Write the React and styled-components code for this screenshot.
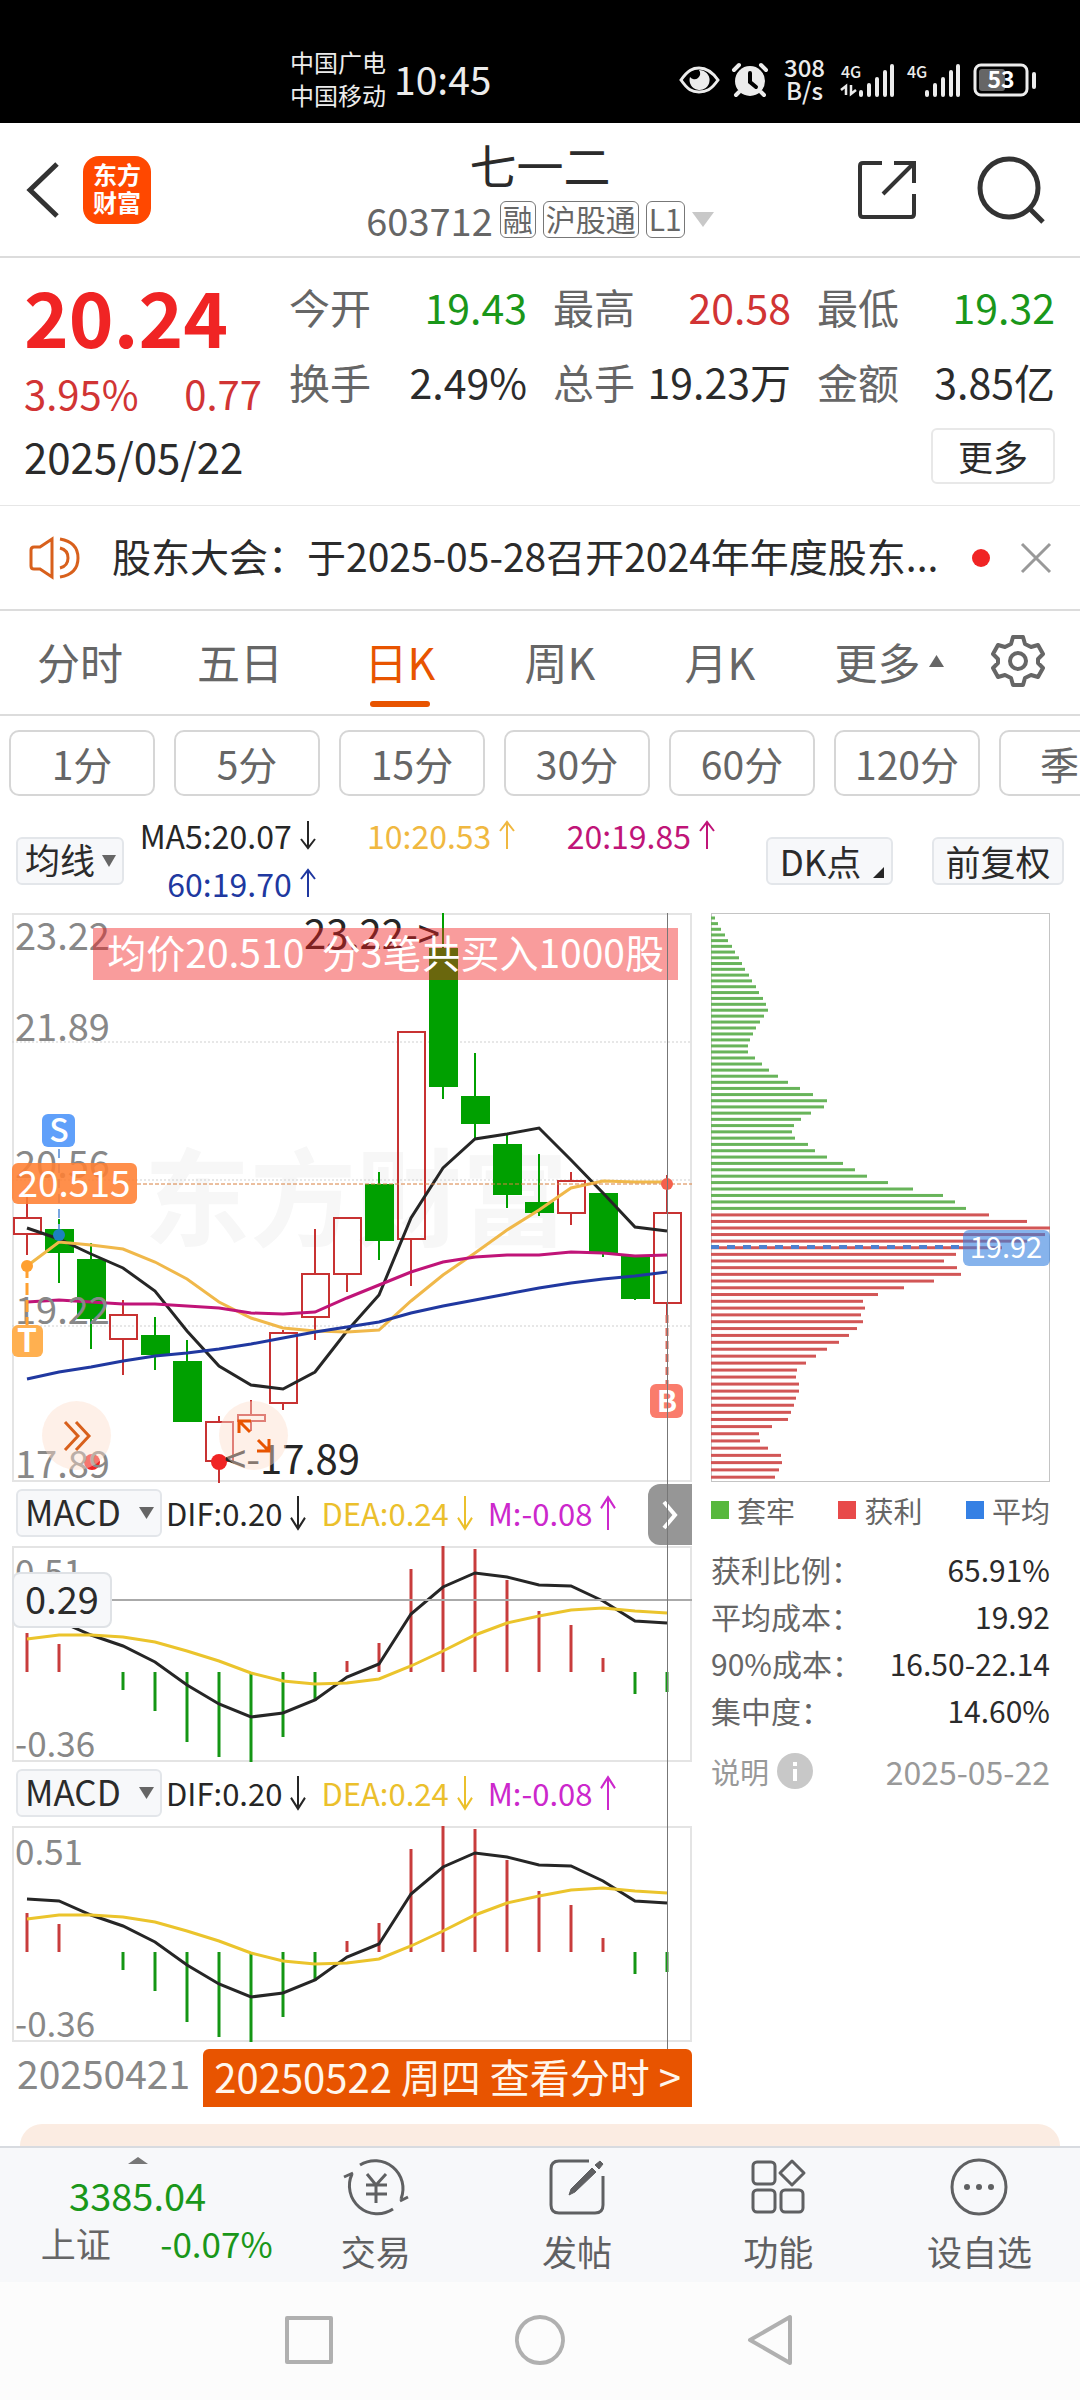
import styled, { createGlobalStyle } from "styled-components";

const GlobalStyle = createGlobalStyle`
  *, *::before, *::after { box-sizing: border-box; }
  body {
    margin: 0;
    background: #fff;
    color: #2b2b2b;
    font-family: "Noto Sans CJK SC", "Noto Sans", sans-serif;
  }
  button, select {
    margin: 0;
    padding: 0;
    border: 0;
    background: none;
    color: inherit;
    font: inherit;
  }
  svg { display: block; flex: none; overflow: visible; }
  svg text { font-family: "Noto Sans CJK SC", "Noto Sans", sans-serif; }
`;

const RED = "#d13434";
const GREEN = "#1a971a";
const ORANGE = "#e85400";

/* ---------- data ---------- */

const quotes = [
  { label: "今开", value: "19.43", color: GREEN },
  { label: "最高", value: "20.58", color: RED },
  { label: "最低", value: "19.32", color: GREEN },
  { label: "换手", value: "2.49%" },
  { label: "总手", value: "19.23万" },
  { label: "金额", value: "3.85亿" },
];

const tabs = ["分时", "五日", "日K", "周K", "月K"];
const periods = ["1分", "5分", "15分", "30分", "60分", "120分", "季K"];

const averages = [
  { text: "MA5:20.07", color: "#262626", down: true },
  { text: "10:20.53", color: "#f0b840" },
  { text: "20:19.85", color: "#c01478" },
  { text: "60:19.70", color: "#2038a0" },
];

// [up, body top, body bottom, high, low]
const candles = [
  [1, 305, 321, 283, 342],
  [0, 317, 339, 306, 370],
  [0, 347, 405, 330, 436],
  [1, 402, 426, 387, 462],
  [0, 423, 441, 404, 457],
  [0, 449, 508, 427, 508],
  [1, 509, 548, 503, 570],
  [1, 502, 508, 487, 518],
  [1, 420, 490, 417, 497],
  [1, 361, 404, 316, 427],
  [1, 305, 361, 304, 379],
  [0, 272, 327, 259, 347],
  [1, 119, 326, 119, 373],
  [0, 36, 173, 0, 186],
  [0, 184, 210, 140, 225],
  [0, 232, 281, 221, 295],
  [0, 290, 299, 241, 303],
  [1, 268, 300, 259, 312],
  [0, 281, 339, 281, 344],
  [0, 343, 385, 343, 387],
  [1, 300, 390, 262, 402],
];

const maLines = [
  ["#262626", [315, 326, 341, 355, 378, 418, 453, 472, 476, 459, 418, 382, 305, 255, 226, 221, 215, 247, 280, 314, 318]],
  ["#f0b84a", [353, 329, 332, 336, 349, 366, 389, 405, 415, 418, 419, 417, 388, 362, 340, 317, 297, 275, 268, 269, 269]],
  ["#c01478", [389, 387, 389, 391, 391, 393, 395, 400, 401, 399, 385, 372, 359, 349, 344, 342, 342, 339, 340, 343, 342]],
  ["#2038a0", [466, 459, 454, 448, 443, 440, 436, 431, 425, 419, 414, 409, 400, 393, 387, 381, 375, 370, 366, 363, 359]],
];

const macdBars = [87, 98, 126, 144, 165, 196, 211, 216, 191, 155, 115, 97, 23, 0, 3, 34, 65, 79, 112, 148, 146];
const difLine = [73, 75, 89, 100, 116, 139, 158, 171, 167, 154, 131, 118, 68, 41, 27, 31, 39, 40, 55, 75, 77];
const deaLine = [93, 89, 89, 91, 96, 105, 115, 127, 135, 138, 137, 133, 120, 105, 89, 77, 70, 64, 62, 65, 67];

const lockedChips = [
  4, 7, 10, 14, 17, 21, 24, 28, 31, 34, 38, 41, 45, 48, 52, 55, 57, 53, 49, 45, 42, 39, 37, 37, 44, 51, 58, 67, 77, 89,
  102, 116, 113, 100, 90, 83, 81, 84, 97, 104, 116, 132, 144, 156, 177, 202, 232, 244, 255,
];
const profitChips = [
  278, 316, 339, 334, 316, 291, 245, 233, 246, 250, 223, 193, 167, 152, 154, 150, 152, 146, 138, 128, 116, 105, 95, 86,
  85, 88, 88, 85, 83, 80, 77, 61, 48, 49, 57, 70, 71, 68, 64,
];

const stats = [
  ["获利比例：", "65.91%"],
  ["平均成本：", "19.92"],
  ["90%成本：", "16.50-22.14"],
  ["集中度：", "14.60%"],
];

const xAt = (i) => 15 + i * 32;
const toPoints = (ys) => ys.map((y, i) => `${xAt(i)},${y}`).join(" ");

/* ---------- shell ---------- */

const Page = styled.div`
  display: flex;
  flex-direction: column;
  min-height: 100vh;
  overflow: hidden;
`;

const StatusBar = styled.header`
  display: flex;
  align-items: center;
  height: 123px;
  padding: 36px 42px 0 290px;
  background: #000;
  color: #ececec;
`;

const Carriers = styled.div`
  padding-bottom: 4px;
  font-size: 24px;
  line-height: 33px;
`;

const Clock = styled.time`
  margin-left: 8px;
  padding-bottom: 4px;
  font-size: 39px;
  line-height: 48px;
`;

const StatusIcons = styled.div`
  display: flex;
  align-items: center;
  gap: 12px;
  margin-left: auto;
`;

const NetSpeed = styled.div`
  margin: 0 4px;
  padding-bottom: 4px;
  font-size: 24px;
  font-weight: 500;
  line-height: 23px;
  text-align: center;
`;

const TopBar = styled.nav`
  display: grid;
  grid-template-columns: 1fr auto 1fr;
  align-items: center;
  height: 135px;
  padding: 0 26px;
  border-bottom: 2px solid #dcdcdc;
`;

const TopSide = styled.div`
  display: flex;
  align-items: center;
  justify-content: ${(p) => (p.$end ? "flex-end" : "flex-start")};
  gap: ${(p) => (p.$end ? 59 : 24)}px;
  padding-right: ${(p) => (p.$end ? 8 : 0)}px;
`;

const IconButton = styled.button`
  display: flex;
  cursor: pointer;
`;

const Logo = styled.span`
  display: grid;
  place-content: center;
  width: 68px;
  height: 68px;
  padding-bottom: 4px;
  border-radius: 16px;
  background: #ff4800;
  color: #fff;
  font-size: 24px;
  font-weight: 700;
  line-height: 28px;
`;

const TitleBlock = styled.div`
  display: flex;
  flex-direction: column;
  align-items: center;
  gap: 4px;
`;

const Title = styled.h1`
  margin: 0;
  font-size: 47px;
  font-weight: 400;
  line-height: 56px;
`;

const Subtitle = styled.div`
  display: flex;
  align-items: center;
  gap: 7px;
  color: #666;
  font-size: 38px;
  line-height: 48px;
`;

const Tag = styled.span`
  height: 37px;
  padding: 0 2px;
  border: 1px solid #777;
  border-radius: 6px;
  font-size: 30px;
  line-height: 32px;
`;

/* ---------- quote ---------- */

const Quote = styled.section`
  display: grid;
  grid-template-columns: 264px 1fr;
  column-gap: 1px;
  padding: 11px 25px 20px 24px;
  border-bottom: 1px solid #e6e6e6;
  font-size: 41px;
`;

const Price = styled.div`
  color: #f02424;
  font-size: 76px;
  font-weight: 700;
  line-height: 92px;
`;

const Change = styled.div`
  display: flex;
  justify-content: space-between;
  padding-right: 26px;
  color: ${RED};
  font-size: 40px;
  line-height: 64px;
`;

const QuoteGrid = styled.dl`
  display: grid;
  grid-template-columns: repeat(3, 1fr);
  column-gap: 26px;
  align-content: start;
  margin: 0;
`;

const QuoteCell = styled.div`
  display: flex;
  justify-content: space-between;
  line-height: 75px;
  white-space: nowrap;

  dt { color: #666; }
  dd { margin: 0; color: ${(p) => p.$color || "#2b2b2b"}; }
`;

const QuoteFoot = styled.div`
  grid-column: 1 / -1;
  display: flex;
  align-items: center;
  justify-content: space-between;
  margin-top: 1px;
  line-height: 59px;

  time { font-size: 42px; }
`;

const MoreButton = styled.button`
  width: 124px;
  height: 56px;
  border: 2px solid #e8e8e8;
  border-radius: 6px;
  font-size: 35px;
  line-height: 46px;
`;

const Notice = styled.section`
  display: flex;
  align-items: center;
  height: 105px;
  padding: 0 28px;
  border-bottom: 2px solid #dcdcdc;
`;

const NoticeLink = styled.a`
  flex: 1;
  min-width: 0;
  margin: 0 26px 0 32px;
  padding-bottom: 6px;
  overflow: hidden;
  color: inherit;
  font-size: 39px;
  line-height: 56px;
  text-decoration: none;
  text-overflow: ellipsis;
  white-space: nowrap;
`;

const UnreadDot = styled.i`
  width: 18px;
  height: 18px;
  margin-right: 30px;
  border-radius: 50%;
  background: #f02424;
`;

/* ---------- tabs ---------- */

const TabBar = styled.div`
  display: grid;
  grid-template-columns: repeat(5, 160fr) 178fr 80fr;
  height: 105px;
  padding-right: 22px;
  border-bottom: 2px solid #dcdcdc;
`;

const Tab = styled.button`
  position: relative;
  display: flex;
  align-items: center;
  justify-content: center;
  gap: 8px;
  padding-bottom: 4px;
  color: ${(p) => (p.$active ? ORANGE : "#666")};
  font-size: 43px;
  line-height: 60px;

  &::after {
    content: "";
    position: absolute;
    bottom: 7px;
    left: calc(50% - 30px);
    width: 60px;
    height: 6px;
    border-radius: 3px;
    background: ${(p) => (p.$active ? ORANGE : "transparent")};
  }
`;

const Periods = styled.div`
  display: flex;
  gap: 19px;
  padding: 14px 0 0 9px;
  overflow: hidden;
`;

const Period = styled.button`
  flex: 0 0 146px;
  height: 66px;
  border: 2px solid #d6d6d6;
  border-radius: 10px;
  color: #666;
  font-size: 39px;
  line-height: 56px;
`;

/* ---------- indicators ---------- */

const IndicatorBar = styled.div`
  display: flex;
  align-items: center;
  height: 117px;
  padding: 12px 16px 0;
`;

const SelectBox = styled.label`
  position: relative;
  flex: none;
  width: ${(p) => p.$width}px;
  height: 48px;

  select {
    width: 100%;
    height: 100%;
    padding: 0 0 4px 7px;
    border: 2px solid #e3e6ea;
    border-radius: 6px;
    appearance: none;
    background: #f7f8fa;
    font-size: 35px;
    line-height: 40px;
  }

  svg {
    position: absolute;
    top: 18px;
    right: 8px;
  }
`;

const Averages = styled.div`
  flex: 1;
  display: grid;
  grid-template-columns: 178fr 200fr 200fr;
  margin: 0 50px 4px 15px;
`;

const Reading = styled.span`
  display: inline-flex;
  align-items: center;
  justify-content: flex-end;
  gap: 8px;
  color: ${(p) => p.$color};
  font-size: 32px;
  line-height: 48px;
  white-space: nowrap;
`;

const OptionButton = styled.button`
  position: relative;
  width: ${(p) => p.$width}px;
  height: 48px;
  margin-left: ${(p) => p.$gap || 0}px;
  padding: 0 ${(p) => (p.$corner ? 28 : 10)}px 0 10px;
  border: 2px solid #e3e6ea;
  border-radius: 6px;
  background: #f7f8fa;
  font-size: 35px;
  line-height: 38px;
  white-space: nowrap;

  svg {
    position: absolute;
    right: 7px;
    bottom: 5px;
  }
`;

/* ---------- charts ---------- */

const Charts = styled.main`
  display: grid;
  grid-template-columns: 680fr 339fr;
  column-gap: 19px;
  align-items: start;
  padding: 0 30px 0 12px;
`;

const ChartColumn = styled.div`
  position: relative;
  min-width: 0;
`;

const ChartFrame = styled.div`
  position: relative;

  > svg { width: 100%; height: auto; }
`;

const Crosshair = styled.div`
  position: absolute;
  top: 0;
  bottom: 75px;
  left: calc(100% * 655 / 680);
  width: 1px;
  background: #777;
`;

const TradeBanner = styled.div`
  position: absolute;
  top: 15px;
  right: 14px;
  height: 52px;
  padding: 0 14px;
  background: rgba(241, 29, 29, 0.44);
  color: #fff;
  font-size: 39px;
  line-height: 47px;
  white-space: pre;
`;

const RoundButton = styled.button`
  position: absolute;
  bottom: 12px;
  left: ${(p) => p.$left}px;
  display: grid;
  place-items: center;
  width: 69px;
  height: 69px;
  border-radius: 50%;
  background: rgba(253, 222, 205, 0.45);
`;

const IndicatorHead = styled.div`
  position: relative;
  display: flex;
  align-items: center;
  gap: 14px;
  height: 64px;
  padding: 0 0 2px 4px;

  label { margin-right: -10px; }
  ${Reading} { font-size: 31px; }
`;

const SideHandle = styled.button`
  position: absolute;
  top: 2px;
  right: 0;
  display: grid;
  place-items: center;
  width: 44px;
  height: 61px;
  border-radius: 12px 0 0 12px;
  background: rgba(110, 110, 110, 0.72);
`;

const ValueTag = styled.output`
  position: absolute;
  top: 26px;
  left: 0;
  width: 100px;
  height: 56px;
  border: 2px solid #dfe2e6;
  border-radius: 8px;
  background: #f7f8fa;
  font-size: 38px;
  line-height: 47px;
  text-align: center;
`;

const DateRow = styled.div`
  display: flex;
  align-items: flex-start;
  justify-content: space-between;
  height: 82px;
  padding: 7px 0 0 5px;
  color: #888;
  font-size: 39px;
  line-height: 46px;
`;

const DayLink = styled.a`
  height: 58px;
  padding: 0 11px;
  border-radius: 6px 6px 0 0;
  background: ${ORANGE};
  color: #fff6ec;
  font-size: 40px;
  line-height: 54px;
  text-decoration: none;
  white-space: nowrap;
`;

const Legend = styled.ul`
  display: flex;
  justify-content: space-between;
  margin: 3px 0 11px;
  padding: 0;
  color: #666;
  font-size: 29px;
  line-height: 50px;
  list-style: none;

  li { display: flex; align-items: center; gap: 8px; }
`;

const Swatch = styled.i`
  width: 18px;
  height: 18px;
  background: ${(p) => p.$color};
`;

const Stats = styled.dl`
  margin: 0;
  font-size: 30px;
  line-height: 47px;

  div { display: flex; justify-content: space-between; }
  dt { color: #666; }
  dd { margin: 0; }
`;

const StatsFoot = styled.div`
  display: flex;
  align-items: center;
  gap: 8px;
  margin-top: 14px;
  color: #999;
  font-size: 29px;
  line-height: 46px;

  time { margin-left: auto; font-size: 32px; }
`;

/* ---------- bottom ---------- */

const PromoCard = styled.div`
  flex: 1;
  min-height: 20px;
  margin: 0 20px;
  border-radius: 44px 44px 0 0;
  background: #fbece2;
`;

const BottomBar = styled.nav`
  display: grid;
  grid-template-columns: 275fr repeat(4, 201fr);
  height: 136px;
  border-top: 2px solid #d8dbe0;
  background: #f7f8fa;
`;

const IndexButton = styled.button`
  display: flex;
  flex-direction: column;
  align-items: center;
  padding-top: 9px;
  color: ${GREEN};
  font-size: 38px;
  line-height: 48px;

  > svg { margin-bottom: 7px; }
`;

const IndexRow = styled.span`
  display: flex;
  justify-content: space-between;
  width: 232px;
  margin-left: 38px;
  font-size: 35px;

  b { color: #666; font-weight: 400; }
`;

const NavItem = styled.a`
  display: flex;
  flex-direction: column;
  align-items: center;
  gap: 8px;
  padding-top: 9px;
  color: #5f6062;
  font-size: 35px;
  line-height: 52px;
  text-decoration: none;
`;

const SystemBar = styled.footer`
  display: flex;
  justify-content: center;
  gap: 181px;
  height: 118px;
  padding-top: 33px;
  background: #fcfcfc;
`;

/* ---------- icons ---------- */

const Arrow = ({ down, size = 28 }) => (
  <svg width="17" height={size} viewBox="0 0 17 28" preserveAspectRatio="none" fill="none" stroke="currentColor" strokeWidth="2">
    <path d={down ? "M8 0V27M1 18L8 27L15 18" : "M8 28V1M1 10L8 1L15 10"} />
  </svg>
);

const Triangle = ({ w, h, up, color = "#666" }) => (
  <svg width={w} height={h} viewBox="0 0 10 10" preserveAspectRatio="none">
    <path d={up ? "M0 10L5 0L10 10Z" : "M0 0H10L5 10Z"} fill={color} />
  </svg>
);

const Signal = ({ data }) => (
  <svg width="54" height="36" viewBox="0 0 54 36">
    <text x="0" y="16" fontSize="16" fontWeight="500" fill="#ececec">4G</text>
    {data && <path d="M5 33V24L0 28M10 23V32L15 28" fill="none" stroke="#ececec" strokeWidth="2.5" />}
    <path d="M20 33V30M28 33V23M36 33V17M44 33V10M51 33V4" stroke="#ececec" strokeWidth="4" strokeLinecap="round" />
  </svg>
);

const StatusGlyphs = () => (
  <StatusIcons>
    <svg width="41" height="30" viewBox="0 0 41 30">
      <path d="M2 15C9 5 14 3 20 3S32 5 39 15C32 25 27 27 20 27S9 25 2 15Z" fill="none" stroke="#ececec" strokeWidth="3" />
      <path d="M20 5A10 10 0 1 1 11 12A5 5 0 1 0 20 5Z" fill="#ececec" />
    </svg>
    <svg width="36" height="34" viewBox="0 0 36 34">
      <circle cx="18" cy="18" r="15" fill="#ececec" />
      <path d="M2 7L7 2M34 7L29 2M7 29L4 32M29 29L32 32" stroke="#ececec" strokeWidth="4" fill="none" strokeLinecap="round" />
      <path d="M18 10V19L24 24" stroke="#000" strokeWidth="4" fill="none" strokeLinecap="round" />
    </svg>
    <NetSpeed>308<br />B/s</NetSpeed>
    <Signal data />
    <Signal />
    <svg width="65" height="34" viewBox="0 0 65 34">
      <rect x="2" y="2" width="52" height="30" rx="6" fill="none" stroke="#ececec" strokeWidth="3" />
      <rect x="6" y="6" width="26" height="22" rx="3" fill="#666" />
      <path d="M61 11V24" stroke="#ececec" strokeWidth="4" strokeLinecap="round" />
      <text x="28" y="25" fontSize="23" fontWeight="700" fill="#fff" textAnchor="middle">53</text>
    </svg>
  </StatusIcons>
);

/* ---------- chart drawings ---------- */

const CandleChart = () => (
  <svg viewBox="0 0 680 569" role="img" aria-label="日K线图">
    <text x="132" y="325" fontSize="106" fontWeight="700" fill="#f7f7f7">东方财富</text>
    <rect x="1" y="1" width="678" height="567" fill="none" stroke="#e4e4e4" strokeWidth="2" />
    <path d="M0 129H680M0 267H680M0 413H680" stroke="#cfcfcf" strokeDasharray="2 2" />
    {candles.map(([up, top, bottom, high, low], i) => (
      <g key={i} stroke={up ? "#c83232" : "#00a000"} strokeWidth="2">
        <path d={`M${xAt(i)} ${high}V${top}M${xAt(i)} ${bottom}V${low}`} />
        <rect x={xAt(i) - 13} y={top} width="27" height={bottom - top} fill={up ? "none" : "#00a000"} />
      </g>
    ))}
    {maLines.map(([color, ys]) => (
      <polyline key={color} points={toPoints(ys)} fill="none" stroke={color} strokeWidth="3" />
    ))}
    <g fill="#888" fontSize="38">
      <text x="3" y="37">23.22</text>
      <text x="3" y="128">21.89</text>
      <text x="3" y="265">20.56</text>
      <text x="3" y="411">19.22</text>
    </g>
    <path d="M125 271H680" stroke="#d88040" strokeDasharray="4 2" />
    <path d="M47 236V322" stroke="#7aa6e0" strokeWidth="2" strokeDasharray="9 6" />
    <path d="M15 353V412" stroke="#ffa030" strokeWidth="3" strokeDasharray="12 5" />
    <path d="M655 402V471" stroke="#d86a5c" strokeWidth="3" strokeDasharray="8 5" />
    <circle cx="47" cy="322" r="6" fill="#1c82c0" />
    <circle cx="15" cy="353" r="6" fill="#ffa030" />
    <circle cx="655" cy="271" r="6" fill="#f4604c" />
    <circle cx="80" cy="549" r="8" fill="#f02424" />
    <circle cx="207" cy="549" r="8" fill="#f02424" />
    <text x="3" y="565" fontSize="38" fill="#888">17.89</text>
    <rect x="0" y="250" width="125" height="41" rx="6" fill="#ff8032" fillOpacity="0.88" />
    <rect x="30" y="201" width="33" height="33" rx="6" fill="#60a0fa" />
    <rect x="0" y="412" width="31" height="32" rx="6" fill="#ffb050" />
    <rect x="638" y="471" width="33" height="34" rx="6" fill="#fa7c6c" />
    <g fill="#fff" textAnchor="middle">
      <text x="62" y="284" fontSize="37">20.515</text>
      <text x="47" y="229" fontSize="32" fontWeight="500">S</text>
      <text x="15" y="439" fontSize="32" fontWeight="700">T</text>
      <text x="655" y="499" fontSize="30" fontWeight="700">B</text>
    </g>
    <g fill="#262626" fontSize="40">
      <text x="428" y="36" textAnchor="end">23.22-&gt;</text>
      <text x="212" y="561">&lt;-17.89</text>
    </g>
  </svg>
);

const MacdChart = ({ level }) => (
  <svg viewBox="0 0 680 216" role="img" aria-label="MACD">
    <rect x="1" y="1" width="678" height="214" fill="none" stroke="#e4e4e4" strokeWidth="2" />
    {macdBars.map((y, i) => (
      <path key={i} d={`M${xAt(i)} 126V${y}`} stroke={y < 126 ? "#c83c3c" : "#149614"} strokeWidth="3" />
    ))}
    <polyline points={toPoints(difLine)} fill="none" stroke="#262626" strokeWidth="3" />
    <polyline points={toPoints(deaLine)} fill="none" stroke="#ebc42c" strokeWidth="3" />
    {level && <path d="M100 54H680" stroke="#aaa" strokeWidth="2" />}
    <g fill="#888" fontSize="35">
      <text x="3" y="39">0.51</text>
      <text x="3" y="211">-0.36</text>
    </g>
  </svg>
);

// rows get slightly further apart towards the lower prices
const chipY = (i) => 5 + 1875 * (Math.exp(0.003 * i) - 1);

const ChipChart = () => (
  <svg viewBox="0 0 339 569" role="img" aria-label="筹码分布">
    <rect x="0.5" y="0.5" width="338" height="568" fill="none" stroke="#c4c4c4" strokeWidth="1" />
    {[...lockedChips, ...profitChips].map((w, i) => (
      <rect key={i} y={chipY(i) - 1.5} width={w} height="3" fill={i < lockedChips.length ? "#68b45a" : "#d25656"} />
    ))}
    <path d="M0 334H252" stroke="#4c80d0" strokeWidth="4" strokeDasharray="8 8" />
    <rect x="252" y="317" width="87" height="36" rx="6" fill="#3580e0" fillOpacity="0.6" />
    <text x="295" y="345" fontSize="29" fill="#fff" textAnchor="middle">19.92</text>
  </svg>
);

const MacdPanel = ({ id, level, handle }) => (
  <>
    <IndicatorHead>
      <SelectBox $width={146}>
        <select aria-label={id} defaultValue="MACD">
          <option>MACD</option>
        </select>
        <Triangle w={15} h={12} />
      </SelectBox>
      <Reading $color="#262626">DIF:0.20<Arrow down size={34} /></Reading>
      <Reading $color="#ebc02c">DEA:0.24<Arrow down size={34} /></Reading>
      <Reading $color="#cc28cc">M:-0.08<Arrow size={34} /></Reading>
      {handle && (
        <SideHandle aria-label="收起筹码">
          <svg width="16" height="28" viewBox="0 0 16 28" fill="none" stroke="#fff" strokeWidth="4">
            <path d="M2 1L13 14L2 27" />
          </svg>
        </SideHandle>
      )}
    </IndicatorHead>
    <ChartFrame>
      <MacdChart level={level} />
      {level && <ValueTag>{level}</ValueTag>}
    </ChartFrame>
  </>
);

export default function App() {
  return (
    <Page>
      <GlobalStyle />
      <StatusBar>
        <Carriers>中国广电<br />中国移动</Carriers>
        <Clock>10:45</Clock>
        <StatusGlyphs />
      </StatusBar>

      <TopBar>
        <TopSide>
          <IconButton aria-label="返回">
            <svg width="33" height="56" viewBox="0 0 33 56" fill="none" stroke="#333" strokeWidth="5">
              <path d="M31 2L4 28L31 54" />
            </svg>
          </IconButton>
          <Logo>东方<br />财富</Logo>
        </TopSide>
        <TitleBlock>
          <Title>七一二</Title>
          <Subtitle>
            603712 <Tag>融</Tag><Tag>沪股通</Tag><Tag>L1</Tag>
            <Triangle w={22} h={15} color="#c8c8c8" />
          </Subtitle>
        </TitleBlock>
        <TopSide $end>
          <IconButton aria-label="分享">
            <svg width="60" height="60" viewBox="0 0 60 60" fill="none" stroke="#333" strokeWidth="4">
              <path d="M25 3H6Q3 3 3 6V54Q3 57 6 57H54Q57 57 57 54V34M37 3H57V23M57 3L26 34" />
            </svg>
          </IconButton>
          <IconButton aria-label="搜索">
            <svg width="70" height="70" viewBox="0 0 70 70" fill="none" stroke="#333" strokeWidth="5">
              <circle cx="33" cy="33" r="29" />
              <path d="M54 54L67 67" />
            </svg>
          </IconButton>
        </TopSide>
      </TopBar>

      <Quote>
        <div>
          <Price>20.24</Price>
          <Change><span>3.95%</span><span>0.77</span></Change>
        </div>
        <QuoteGrid>
          {quotes.map((q) => (
            <QuoteCell key={q.label} $color={q.color}>
              <dt>{q.label}</dt>
              <dd>{q.value}</dd>
            </QuoteCell>
          ))}
        </QuoteGrid>
        <QuoteFoot>
          <time>2025/05/22</time>
          <MoreButton>更多</MoreButton>
        </QuoteFoot>
      </Quote>

      <Notice>
        <svg width="52" height="44" viewBox="0 0 52 44" fill="none" stroke="#d8601c" strokeWidth="3">
          <path d="M24 3V41L12 33H6Q3 33 3 30V14Q3 11 6 11H12Z" />
          <path d="M32 12Q40 14 40 22T32 32M32 3Q50 6 50 22T32 41" />
        </svg>
        <NoticeLink href="#notice">股东大会：于2025-05-28召开2024年年度股东...</NoticeLink>
        <UnreadDot />
        <IconButton aria-label="关闭">
          <svg width="32" height="30" viewBox="0 0 32 30" stroke="#999" strokeWidth="3">
            <path d="M2 1L30 29M30 1L2 29" />
          </svg>
        </IconButton>
      </Notice>

      <TabBar>
        {tabs.map((t) => (
          <Tab key={t} $active={t === "日K"}>{t}</Tab>
        ))}
        <Tab>更多<Triangle w={15} h={12} up /></Tab>
        <Tab aria-label="设置">
          <svg width="54" height="54" viewBox="0 0 54 54" fill="none" stroke="#666" strokeWidth="4" strokeLinejoin="round">
            <path d="M22 3H32L34 10L40 13L47 11L52 20L47 25V29L52 34L47 43L40 41L34 44L32 51H22L20 44L14 41L7 43L2 34L7 29V25L2 20L7 11L14 13L20 10Z" />
            <circle cx="27" cy="27" r="8" />
          </svg>
        </Tab>
      </TabBar>

      <Periods>
        {periods.map((p) => (
          <Period key={p}>{p}</Period>
        ))}
      </Periods>

      <IndicatorBar>
        <SelectBox $width={108}>
          <select aria-label="主图指标" defaultValue="均线">
            <option>均线</option>
          </select>
          <Triangle w={14} h={12} />
        </SelectBox>
        <Averages>
          {averages.map((a) => (
            <Reading key={a.text} $color={a.color}>{a.text}<Arrow down={a.down} /></Reading>
          ))}
        </Averages>
        <OptionButton $width={127} $corner>
          DK点
          <svg width="11" height="11" viewBox="0 0 11 11"><path d="M11 0V11H0Z" fill="#262626" /></svg>
        </OptionButton>
        <OptionButton $width={132} $gap={39}>前复权</OptionButton>
      </IndicatorBar>

      <Charts>
        <ChartColumn>
          <ChartFrame>
            <CandleChart />
            <TradeBanner>均价20.510  分3笔共买入1000股</TradeBanner>
            <RoundButton $left={30} aria-label="展开">
              <svg width="28" height="30" viewBox="0 0 28 30" fill="none" stroke="#d8601c" strokeWidth="3">
                <path d="M2 1L15 15L2 29M13 1L26 15L13 29" />
              </svg>
            </RoundButton>
            <RoundButton $left={207} aria-label="全屏">
              <svg width="34" height="34" viewBox="0 0 34 34" fill="none" stroke={ORANGE} strokeWidth="3">
                <path d="M2 14V2H14M2 2L13 13M32 20V32H20M32 32L21 21" />
              </svg>
            </RoundButton>
          </ChartFrame>
          <MacdPanel id="副图1" level="0.29" handle />
          <MacdPanel id="副图2" />
          <DateRow>
            <time>20250421</time>
            <DayLink href="#day">20250522 周四 查看分时 &gt;</DayLink>
          </DateRow>
          <Crosshair />
        </ChartColumn>

        <aside>
          <ChartFrame><ChipChart /></ChartFrame>
          <Legend>
            <li><Swatch $color="#58b83e" />套牢</li>
            <li><Swatch $color="#e84a4a" />获利</li>
            <li><Swatch $color="#3580e4" />平均</li>
          </Legend>
          <Stats>
            {stats.map(([label, value]) => (
              <div key={label}><dt>{label}</dt><dd>{value}</dd></div>
            ))}
          </Stats>
          <StatsFoot>
            说明
            <svg width="36" height="36" viewBox="0 0 36 36">
              <circle cx="18" cy="18" r="18" fill="#c8c8c8" />
              <path d="M18 9V13M18 16V28" stroke="#fff" strokeWidth="4" />
            </svg>
            <time>2025-05-22</time>
          </StatsFoot>
        </aside>
      </Charts>

      <PromoCard />

      <BottomBar>
        <IndexButton>
          <Triangle w={20} h={7} up color="#777" />
          <span>3385.04</span>
          <IndexRow><b>上证</b><span>-0.07%</span></IndexRow>
        </IndexButton>
        <NavItem href="#trade">
          <svg width="66" height="60" viewBox="0 0 66 60" fill="none" stroke="currentColor" strokeWidth="3">
            <path d="M17 8A28 28 0 0 1 58 42M50 52A28 28 0 0 1 9 17" />
            <path d="M1 20L10 16M65 40L57 44" />
            <path d="M24 17L33 28L43 17M33 28V46M23 28H44M23 37H44" />
          </svg>
          交易
        </NavItem>
        <NavItem href="#post">
          <svg width="60" height="60" viewBox="0 0 60 60" fill="none" stroke="currentColor" strokeWidth="3">
            <path d="M42 4H12Q4 4 4 12V48Q4 56 12 56H48Q56 56 56 48V19" />
            <path d="M22 38L24 32L45 11L49 15L28 35Z M48 8L53 4L56 7L52 12Z" fill="currentColor" strokeWidth="1" />
          </svg>
          发帖
        </NavItem>
        <NavItem href="#features">
          <svg width="60" height="60" viewBox="0 0 60 60" fill="none" stroke="currentColor" strokeWidth="3">
            <rect x="5" y="5" width="22" height="22" rx="4" />
            <rect x="5" y="33" width="22" height="22" rx="4" />
            <rect x="33" y="33" width="22" height="22" rx="4" />
            <path d="M44 4L56 16L44 28L32 16Z" strokeLinejoin="round" />
          </svg>
          功能
        </NavItem>
        <NavItem href="#watchlist">
          <svg width="60" height="60" viewBox="0 0 60 60">
            <circle cx="30" cy="30" r="27" fill="none" stroke="currentColor" strokeWidth="3" />
            <g fill="currentColor">
              <circle cx="18" cy="30" r="3" />
              <circle cx="30" cy="30" r="3" />
              <circle cx="42" cy="30" r="3" />
            </g>
          </svg>
          设自选
        </NavItem>
      </BottomBar>

      <SystemBar>
        {["M3 3H47V47H3Z", "M25 2A23 23 0 1 1 24.9 2Z", "M44 2V48L4 25Z"].map((d) => (
          <IconButton key={d} aria-label="系统导航">
            <svg width="50" height="50" viewBox="0 0 50 50" fill="none" stroke="#b0b0b0" strokeWidth="4" strokeLinejoin="round">
              <path d={d} />
            </svg>
          </IconButton>
        ))}
      </SystemBar>
    </Page>
  );
}
